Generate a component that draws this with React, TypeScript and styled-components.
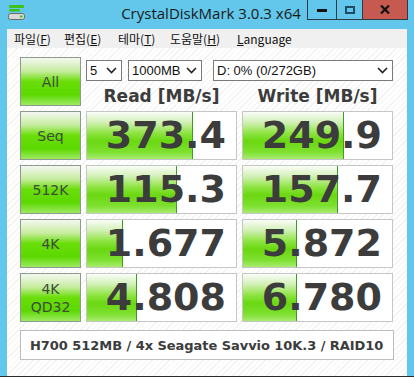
import React from 'react';
import styled, { createGlobalStyle } from 'styled-components';

const GlobalStyle = createGlobalStyle`
  html, body {
    margin: 0;
    padding: 0;
    background: #62c7ea;
  }
  * {
    box-sizing: border-box;
  }
`;

const Window = styled.div`
  width: 414px;
  height: 377px;
  display: flex;
  flex-direction: column;
  background: #62c7ea;
  padding: 0 7px 0 7px;
  border-bottom: 1px solid #2b2b2b;
  font-family: "DejaVu Sans", Verdana, sans-serif;
`;

const TitleBar = styled.div`
  height: 29px;
  display: flex;
  align-items: flex-start;
  position: relative;
  margin: 0 -7px;
`;

const AppIcon = styled.svg`
  position: absolute;
  left: 8px;
  top: 5px;
`;

const Title = styled.div`
  flex: 1;
  text-align: center;
  font-family: "Open Sans", "Noto Sans", sans-serif;
  font-size: 15px;
  line-height: 26px;
  color: #1a1a1a;
  padding-left: 8px;
`;

const Controls = styled.div`
  position: absolute;
  right: 6px;
  top: 0;
  display: flex;
  height: 20px;
  border: 1px solid #2f3a44;
  border-top: none;
`;

const Ctl = styled.div<{ $w: number; $close?: boolean }>`
  width: ${p => p.$w}px;
  height: 19px;
  display: flex;
  align-items: center;
  justify-content: center;
  background: ${p => (p.$close ? '#c75a50' : 'transparent')};
  & + & {
    border-left: 1px solid #2f3a44;
  }
`;

const MenuBar = styled.div`
  height: 19px;
  background: #f0f0f0;
  display: flex;
  align-items: center;
  padding-left: 7px;
  font-family: "Noto Sans CJK KR", "Noto Sans", sans-serif;
  font-size: 12px;
  color: #111;
`;

const MenuItem = styled.span<{ $w: number }>`
  width: ${p => p.$w}px;
  line-height: 19px;
  u {
    text-decoration: underline;
    text-underline-offset: 1px;
  }
`;

const Client = styled.div`
  flex: 1;
  background: repeating-linear-gradient(135deg, #ffffff 0 3px, #f2f2f2 3px 4px);
  padding: 9px 13px 0 13px;
  display: flex;
  flex-direction: column;
`;

const Grid = styled.div`
  display: grid;
  grid-template-columns: 61px 151px 151px;
  grid-template-rows: 49px repeat(4, 49px);
  column-gap: 5px;
  row-gap: 5px;
`;

const TestButton = styled.div`
  border: 1px solid #8e9a8e;
  background: linear-gradient(#f4f8f2 0%, #c6ec9e 28%, #6ade08 50%, #5cd800 78%, #9eea62 100%);
  display: flex;
  flex-direction: column;
  align-items: center;
  justify-content: center;
  color: #3d4a3d;
  font-size: 14px;
  line-height: 18px;
`;

const HeadArea = styled.div`
  grid-column: 2 / span 2;
  display: flex;
  flex-direction: column;
  padding-top: 3px;
`;

const Selects = styled.div`
  display: flex;
  height: 21px;
`;

const Select = styled.div<{ $w: number; $gap: number }>`
  width: ${p => p.$w}px;
  margin-right: ${p => p.$gap}px;
  height: 21px;
  background: #fff;
  border: 1px solid #7a7a7a;
  display: flex;
  align-items: center;
  justify-content: space-between;
  padding: 0 4px 0 3px;
  font-family: "Liberation Sans", Arial, sans-serif;
  font-size: 13px;
  color: #111;
`;

const Heads = styled.div`
  display: grid;
  grid-template-columns: 151px 151px;
  column-gap: 5px;
  margin-top: 4px;
`;

const Head = styled.div`
  text-align: center;
  font-weight: bold;
  font-size: 17px;
  line-height: 22px;
  color: #3c3c3c;
`;

const Cell = styled.div`
  position: relative;
  background: #fff;
  border: 1px solid #c6c6c6;
  overflow: hidden;
`;

const Bar = styled.div`
  position: absolute;
  left: 0;
  top: 0;
  bottom: 0;
  background: linear-gradient(#fafdf8 0%, #d2f0b6 22%, #8ee442 45%, #6ad810 62%, #7ee030 85%, #a8ec70 100%);
  border-right: 1px solid #3e9a2a;
`;

const Value = styled.div`
  position: relative;
  height: 100%;
  display: flex;
  align-items: center;
  justify-content: flex-end;
  padding: 0 10px 2px 0;
  font-weight: bold;
  font-size: 38px;
  color: #3c3c3c;
`;

const Comment = styled.div`
  margin-top: 8px;
  width: 374px;
  height: 30px;
  background: #fff;
  border: 1px solid #bdbdbd;
  display: flex;
  align-items: center;
  padding-left: 9px;
  font-weight: bold;
  font-size: 13px;
  letter-spacing: -0.05px;
  white-space: nowrap;
  color: #3c3c3c;
`;

const Chevron = () => (
  <svg width="11" height="7" viewBox="0 0 11 7">
    <path d="M1 1 L5.5 5.5 L10 1" fill="none" stroke="#222" strokeWidth="1.6" />
  </svg>
);

const rows = [
  { label: ['Seq'], read: '373.4', rw: 106, write: '249.9', ww: 101 },
  { label: ['512K'], read: '115.3', rw: 90, write: '157.7', ww: 95 },
  { label: ['4K'], read: '1.677', rw: 36, write: '5.872', ww: 54 },
  { label: ['4K', 'QD32'], read: '4.808', rw: 50, write: '6.780', ww: 54 },
];

export default function App() {
  return (
    <>
      <GlobalStyle />
      <Window>
        <TitleBar>
          <AppIcon width="18" height="16" viewBox="0 0 18 16">
            <rect x="1" y="0" width="15" height="3" rx="1" fill="#3cc21a" />
            <rect x="1" y="4" width="11" height="2.5" rx="1" fill="#3cc21a" />
            <rect x="0.5" y="8.5" width="16" height="6" rx="2" fill="#d8d8d8" stroke="#6a6a6a" />
            <rect x="12" y="10.5" width="2.5" height="2" fill="#3cc21a" />
          </AppIcon>
          <Title>CrystalDiskMark 3.0.3 x64</Title>
          <Controls>
            <Ctl $w={28}>
              <svg width="10" height="4"><rect width="10" height="3" y="1" fill="#111" /></svg>
            </Ctl>
            <Ctl $w={26}>
              <svg width="10" height="8"><rect x="1" y="1" width="8" height="6" fill="none" stroke="#1f4a64" strokeWidth="2" /></svg>
            </Ctl>
            <Ctl $w={45} $close>
              <svg width="10" height="9" viewBox="0 0 10 9">
                <path d="M1 0.5 L9 8.5 M9 0.5 L1 8.5" stroke="#111" strokeWidth="2.2" />
              </svg>
            </Ctl>
          </Controls>
        </TitleBar>
        <MenuBar>
          <MenuItem $w={50}>파일(<u>F</u>)</MenuItem>
          <MenuItem $w={54}>편집(<u>E</u>)</MenuItem>
          <MenuItem $w={52}>테마(<u>T</u>)</MenuItem>
          <MenuItem $w={67}>도움말(<u>H</u>)</MenuItem>
          <MenuItem $w={70}><u>L</u>anguage</MenuItem>
        </MenuBar>
        <Client>
          <Grid>
            <TestButton>All</TestButton>
            <HeadArea>
              <Selects>
                <Select $w={36} $gap={6}>5 <Chevron /></Select>
                <Select $w={74} $gap={11}>1000MB <Chevron /></Select>
                <Select $w={180} $gap={0}>D: 0% (0/272GB) <Chevron /></Select>
              </Selects>
              <Heads>
                <Head>Read [MB/s]</Head>
                <Head>Write [MB/s]</Head>
              </Heads>
            </HeadArea>
            {rows.map(r => (
              <React.Fragment key={r.read}>
                <TestButton>
                  {r.label.map(l => (
                    <span key={l}>{l}</span>
                  ))}
                </TestButton>
                <Cell>
                  <Bar style={{ width: r.rw }} />
                  <Value>{r.read}</Value>
                </Cell>
                <Cell>
                  <Bar style={{ width: r.ww }} />
                  <Value>{r.write}</Value>
                </Cell>
              </React.Fragment>
            ))}
          </Grid>
          <Comment>H700 512MB / 4x Seagate Savvio 10K.3 / RAID10</Comment>
        </Client>
      </Window>
    </>
  );
}
